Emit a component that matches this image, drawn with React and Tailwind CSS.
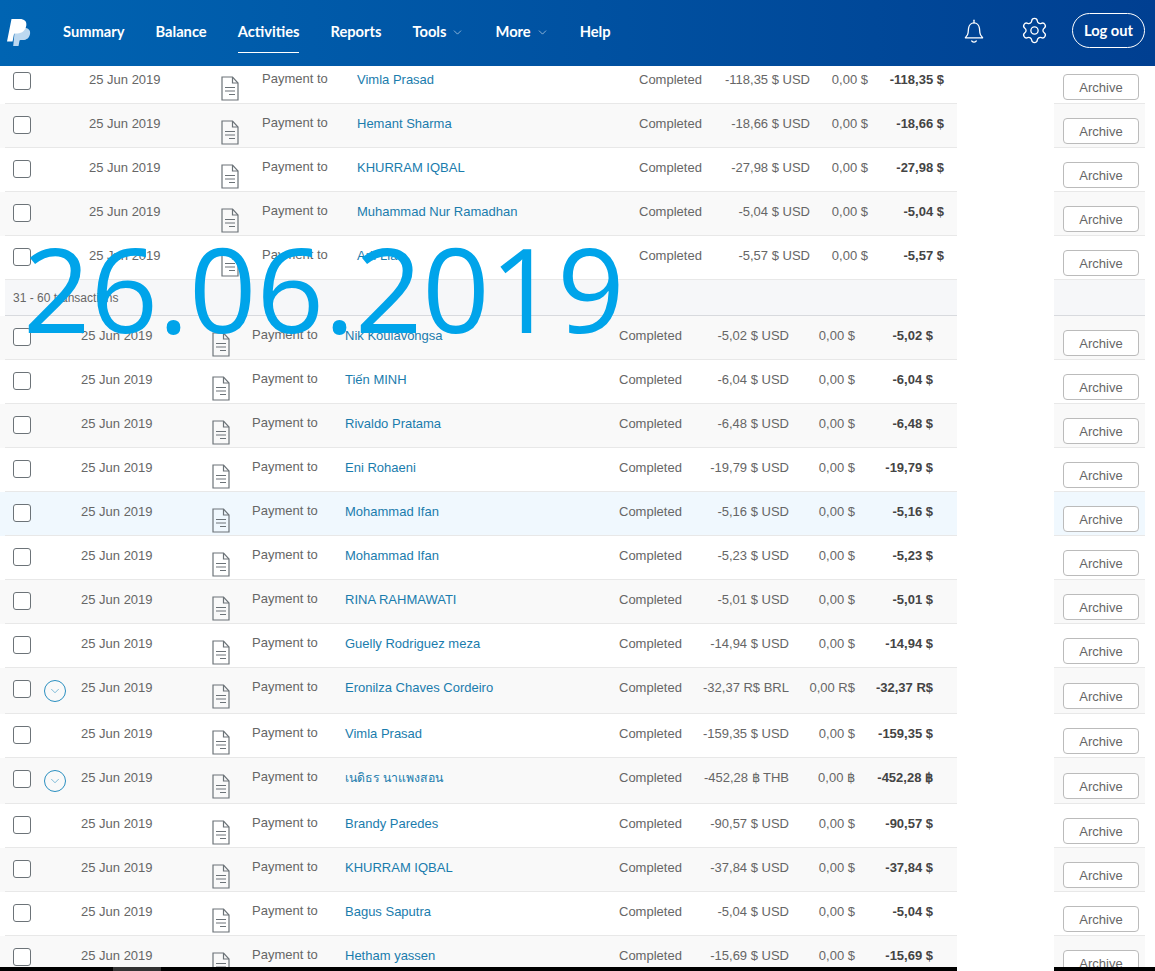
import { ChevronDown, Settings } from "lucide-react";

const NAV = [
  { label: "Summary" },
  { label: "Balance" },
  { label: "Activities", active: true },
  { label: "Reports" },
  { label: "Tools", menu: true },
  { label: "More", menu: true },
  { label: "Help" },
];

const FIRST = [
  { name: "Vimla Prasad", amount: "-118,35" },
  { name: "Hemant Sharma", amount: "-18,66", bg: "grey" },
  { name: "KHURRAM IQBAL", amount: "-27,98" },
  { name: "Muhammad Nur Ramadhan", amount: "-5,04", bg: "grey" },
  { name: "Arif Lia", amount: "-5,57" },
];

const SECOND = [
  { name: "Nik Koulavongsa", amount: "-5,02", bg: "grey" },
  { name: "Tiến MINH", amount: "-6,04" },
  { name: "Rivaldo Pratama", amount: "-6,48", bg: "grey" },
  { name: "Eni Rohaeni", amount: "-19,79" },
  { name: "Mohammad Ifan", amount: "-5,16", bg: "blue" },
  { name: "Mohammad Ifan", amount: "-5,23" },
  { name: "RINA RAHMAWATI", amount: "-5,01", bg: "grey" },
  { name: "Guelly Rodriguez meza", amount: "-14,94" },
  { name: "Eronilza Chaves Cordeiro", amount: "-32,37", symbol: "R$", code: "BRL", bg: "grey", expand: true },
  { name: "Vimla Prasad", amount: "-159,35" },
  { name: "เนดิธร นาแพงสอน", amount: "-452,28", symbol: "฿", code: "THB", bg: "grey", expand: true, thai: true },
  { name: "Brandy Paredes", amount: "-90,57" },
  { name: "KHURRAM IQBAL", amount: "-37,84", bg: "grey" },
  { name: "Bagus Saputra", amount: "-5,04" },
  { name: "Hetham yassen", amount: "-15,69", bg: "grey" },
];

const ROW_BG = { grey: "bg-[#f9f9f9]", blue: "bg-[#f0f8fe]" };

function PayPalLogo() {
  return (
    <svg width="24" height="28" viewBox="0 0 24 28" className="shrink-0">
      <path d="M8 9h9.500c3.600 0 6 2 5.600 5.400-.5 4.200-3.400 6.600-7.300 6.600h-2.300c-.5 0-.9.300-1 .8l-1 5.200H6.200z" fill="#bcd8f0" />
      <path d="M4.500 0h8.200c4.600 0 7.300 2.300 6.600 6.600-.7 4.800-4.200 7.900-8.800 7.900H8c-.6 0-1 .4-1.100.9l-1.300 7.100H0z" fill="#ffffff" />
    </svg>
  );
}

function BellIcon() {
  return (
    <svg width="20" height="25" viewBox="0 0 22 27" fill="none" stroke="white" strokeWidth="1.400" strokeLinecap="round" strokeLinejoin="round" className="mt-[2px]">
      <path d="M11 1v3" />
      <path d="M1.500 20.500c0-.8 2.500-2 3-5.500l.5-5c.4-3.500 3-6 6-6s5.600 2.500 6 6l.5 5c.5 3.500 3 4.700 3 5.500z" />
      <path d="M8.500 24c1.400 1.300 3.600 1.300 5 0" />
    </svg>
  );
}

function DocIcon() {
  return (
    <svg width="18" height="25" viewBox="0 0 18 25" fill="none" stroke="#6c7378" strokeWidth="1.200">
      <path d="M1 1h10.500L17 7v17H1z" />
      <path d="M11.500 1v6H17" />
      <path d="M4 11.500h10M4 15h10M8 18.500h6" />
    </svg>
  );
}

function Row({ row, section }) {
  const symbol = row.symbol || "$";
  const code = row.code || "USD";
  const second = section === "second";
  return (
    <div className={`flex ${row.expand ? "h-[46px]" : "h-11"} ${ROW_BG[row.bg] || "bg-white"}`}>
      <div
        className={`ml-[5px] w-[952px] grid border-b border-[#e8e8e8] pl-2 text-[13px] leading-4 text-[#666666] ${
          second
            ? "grid-cols-[68px_131px_40px_93px_274px_71px_99px_66px_78px]"
            : "grid-cols-[76px_132px_41px_95px_282px_71px_100px_58px_76px]"
        }`}
      >
        <div className="flex items-start gap-[13px] pt-3">
          <span className="h-[18px] w-[18px] shrink-0 rounded-[3px] border border-[#6c7378] bg-white" />
          {row.expand && (
            <span className="flex h-[22px] w-[22px] shrink-0 items-center justify-center rounded-full border border-[#2a8fc0]">
              <ChevronDown size={14} strokeWidth={1} color="#2a8fc0" />
            </span>
          )}
        </div>
        <div className="pt-3">25 Jun 2019</div>
        <div className="pt-4">
          <DocIcon />
        </div>
        <div className="pt-[11px]">Payment to</div>
        <div className={`pt-3 text-[#1a7cad] ${row.thai ? "text-[12.3px]" : ""}`}>{row.name}</div>
        <div className="pt-3">Completed</div>
        <div className="pt-3 text-right">{`${row.amount} ${symbol} ${code}`}</div>
        <div className="pt-3 text-right">{`0,00 ${symbol}`}</div>
        <div className="pt-3 text-right font-bold text-[#444444]">{`${row.amount} ${symbol}`}</div>
      </div>
      <div className="w-[97px] bg-white" />
      <div className={`w-[91px] border-b border-[#e8e8e8] pl-[9px] ${row.expand ? "pt-[15px]" : "pt-[14px]"}`}>
        <button className="h-[26px] w-[76px] rounded-[4px] border border-[#bbbbbb] bg-white pt-px text-[13px] text-[#666666]">
          Archive
        </button>
      </div>
      <div className="flex-1 bg-white" />
    </div>
  );
}

export default function App() {
  return (
    <div className="relative flex h-[971px] flex-col overflow-hidden bg-white" style={{ fontFamily: '"Liberation Sans", Arial, sans-serif' }}>
      <header className="relative z-10 flex h-[66px] shrink-0 items-center bg-gradient-to-r from-[#0064b2] to-[#003f91] pl-[7px] pr-[10px] text-white">
        <PayPalLogo />
        <nav className="ml-[32px] flex h-full items-center gap-[31px] pb-1 font-['Lato',sans-serif] text-[14.7px] font-bold">
          {NAV.map((item) => (
            <a key={item.label} className={`flex h-full items-center gap-[5px] ${item.active ? "relative" : ""}`}>
              {item.label}
              {item.menu && <ChevronDown size={13} strokeWidth={1} className="mt-0.5" />}
              {item.active && <span className="absolute left-0 right-0 top-[52px] h-px bg-white" />}
            </a>
          ))}
        </nav>
        <div className="mb-[5px] ml-auto flex items-center">
          <BellIcon />
          <Settings size={29} strokeWidth={1.100} className="ml-[36px]" />
          <button className="ml-[23px] h-[35px] w-[73px] rounded-full border border-white font-['Lato',sans-serif] text-[14.7px] font-bold">
            Log out
          </button>
        </div>
      </header>

      <main className="-mt-[6px] flex-1 overflow-hidden">
        {FIRST.map((row, i) => (
          <Row key={i} row={row} section="first" />
        ))}
        <div className="flex h-9 bg-white">
          <div className="ml-[5px] flex w-[952px] items-center border-b border-[#d8dade] bg-[#f6f7f9] pl-2 text-xs text-[#666666]">
            31 - 60 transactions
          </div>
          <div className="w-[97px]" />
          <div className="w-[91px] border-b border-[#d8dade] bg-[#f6f7f9]" />
        </div>
        {SECOND.map((row, i) => (
          <Row key={i} row={row} section="second" />
        ))}
      </main>

      <div className="flex h-1 shrink-0">
        <div className="w-[113px] bg-black" />
        <div className="w-[48px] bg-[#333333]" />
        <div className="w-[796px] bg-black" />
        <div className="w-[97px] bg-white" />
        <div className="flex-1 bg-black" />
      </div>

      <div className="absolute left-[23px] top-[212px] font-['Open_Sans',sans-serif] text-[118px] leading-[152px] text-[#00a4ea]">
        26.06.2019
      </div>
    </div>
  );
}
